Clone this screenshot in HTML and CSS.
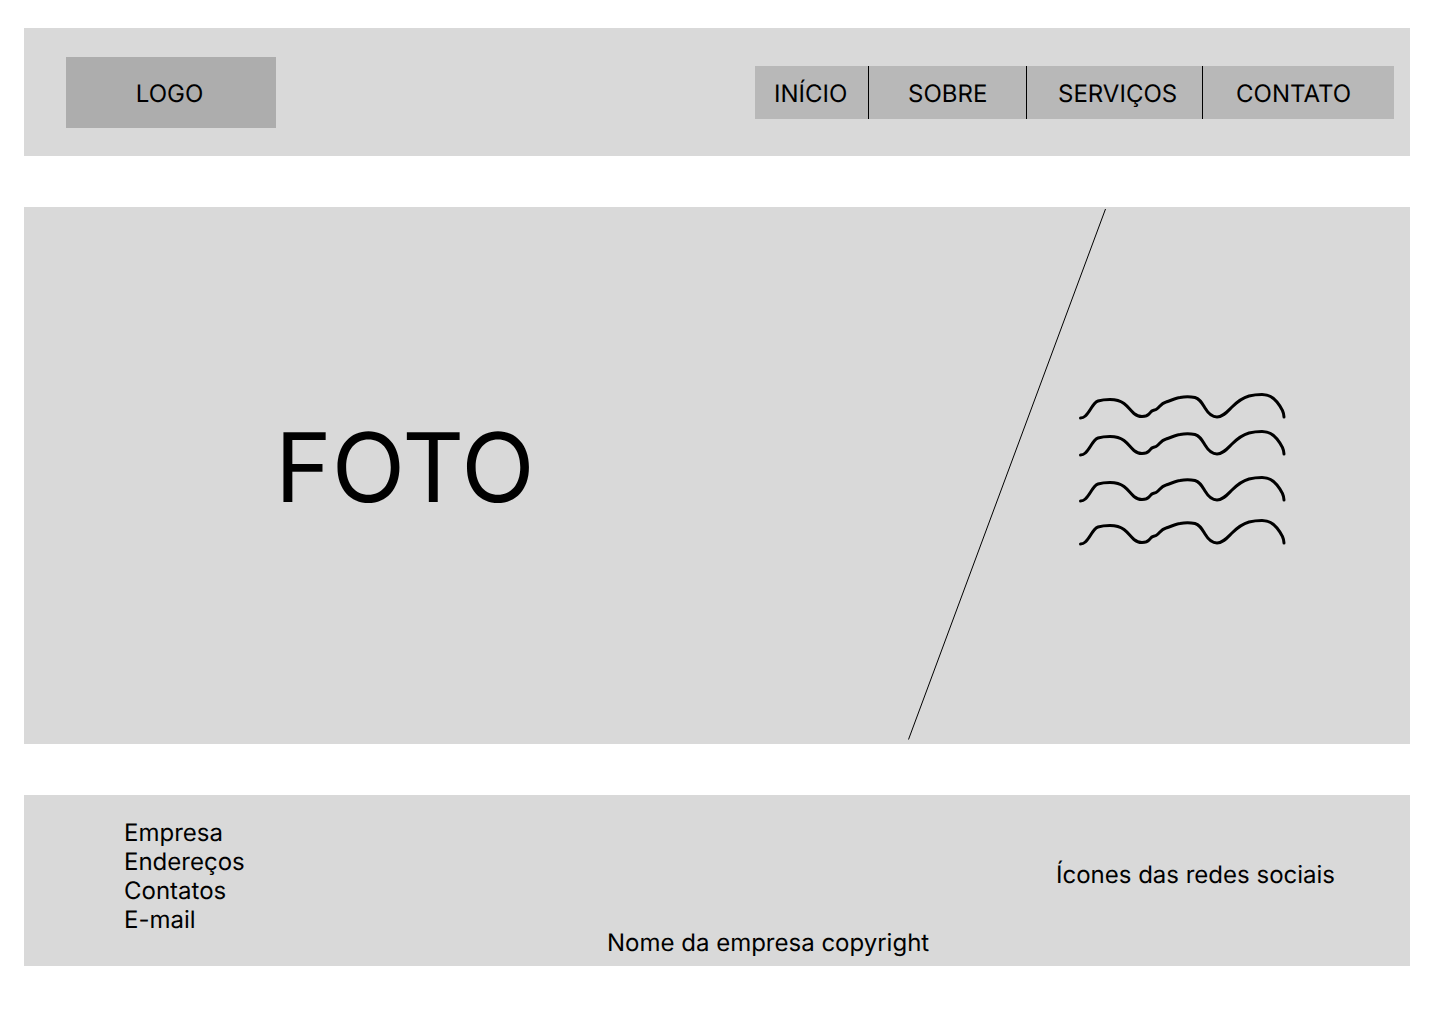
FILE: index.html
```html
<!DOCTYPE html>
<html lang="pt-BR">
<head>
  <meta charset="UTF-8">
  <meta name="viewport" content="width=device-width, initial-scale=1.0">
  <title>Wireframe</title>
  <link rel="stylesheet" href="styles.css">
</head>
<body>
  <header class="site-header">
    <div class="logo">LOGO</div>
    <nav class="menu">
      <a class="menu-item menu-inicio">INÍCIO</a>
      <a class="menu-item menu-sobre">SOBRE</a>
      <a class="menu-item menu-servicos">SERVIÇOS</a>
      <a class="menu-item menu-contato">CONTATO</a>
    </nav>
  </header>

  <main class="hero">
    <h1 class="hero-title">FOTO</h1>
    <!-- diagonal e rabiscos de texto -->
    <svg class="hero-drawing" viewBox="0 0 1386 537" width="1386" height="537" aria-hidden="true">
      <defs>
        <path id="squiggle" d="M1056.5 211 C1060.5 211 1062.5 208 1066 203 C1069 198 1071 195 1074 194 C1079 192.5 1082 192.5 1086 192.5 C1092 192.5 1096 193.5 1100 196.5 C1104 199.5 1106 203 1110 206.5 C1113 209 1115 209.5 1118 209.5 C1121 209.5 1123 209.5 1125 207 C1127 205 1127 204 1129 203.5 C1131 203 1132 203 1134 201 C1136 199 1138 196 1142 195 C1147 193.5 1152 191 1156 190.5 C1161 189.5 1166 189.5 1171 190.5 C1176 192 1178 196 1181 201 C1184 206 1188 210 1193 210 C1199 210 1203 205 1208 200 C1213 195 1218 191 1225 189 C1231 187.5 1235 187.5 1238 187.5 C1244 187.5 1249 190 1253 195 C1257 200 1260 205 1260 210"/>
      </defs>
      <line class="hero-line" x1="1081.5" y1="2" x2="884.5" y2="532.5"/>
      <use href="#squiggle"/>
      <use href="#squiggle" y="37"/>
      <use href="#squiggle" y="83"/>
      <use href="#squiggle" y="126"/>
    </svg>
  </main>

  <footer class="site-footer">
    <ul class="footer-info">
      <li>Empresa</li>
      <li>Endereços</li>
      <li>Contatos</li>
      <li>E-mail</li>
    </ul>
    <p class="footer-copy">Nome da empresa copyright</p>
    <p class="footer-social">Ícones das redes sociais</p>
  </footer>
</body>
</html>
```

FILE: styles.css
```css
* {
  box-sizing: border-box;
}

body {
  margin: 0;
  padding: 28px 30px 58px 24px;
  background-color: #fff;
  color: #000;
  font-family: Inter, "Liberation Sans", sans-serif;
  font-size: 24px;
  line-height: 29px;
  text-rendering: geometricPrecision;
}

/* cabecalho */
.site-header {
  display: flex;
  align-items: flex-start;
  justify-content: space-between;
  height: 128px;
  padding: 29px 16px 0 42px;
  background-color: #d9d9d9;
}

.logo {
  display: flex;
  align-items: center;
  justify-content: center;
  width: 210px;
  height: 71px;
  padding: 2px 3px 0 0;
  background-color: #adadad;
}

.menu {
  display: flex;
  height: 53px;
  margin-top: 9px;
  background-color: #b8b8b8;
}

.menu-item {
  display: flex;
  align-items: center;
  padding-top: 2px;
  border-right: 1px solid #000;
}

.menu-inicio {
  width: 114px;
  padding-left: 19px;
}

.menu-sobre {
  width: 158px;
  padding-left: 39px;
}

.menu-servicos {
  width: 176px;
  padding-left: 31px;
}

.menu-contato {
  width: 191px;
  padding-left: 33px;
  border-right: 0;
}

/* area principal */
.hero {
  position: relative;
  display: flex;
  align-items: center;
  height: 537px;
  margin-top: 51px;
  padding: 0 0 16px 251px;
  background-color: #d9d9d9;
}

.hero-title {
  margin: 0;
  font-size: 96px;
  font-weight: 400;
  line-height: 116px;
}

.hero-drawing {
  position: absolute;
  top: 0;
  left: 0;
}

.hero-line {
  stroke: #000;
  stroke-width: 1;
}

.hero-drawing use {
  fill: none;
  stroke: #000;
  stroke-width: 3;
  stroke-linecap: round;
  stroke-linejoin: round;
}

/* rodape */
.site-footer {
  display: grid;
  grid-template-columns: 483px 449px auto;
  height: 171px;
  margin-top: 51px;
  padding-left: 100px;
  background-color: #d9d9d9;
}

.footer-info {
  margin: 0;
  padding: 23px 0 0;
  list-style: none;
}

.footer-copy {
  align-self: end;
  margin: 0 0 9px;
}

.footer-social {
  margin: 65px 0 0;
}
```
